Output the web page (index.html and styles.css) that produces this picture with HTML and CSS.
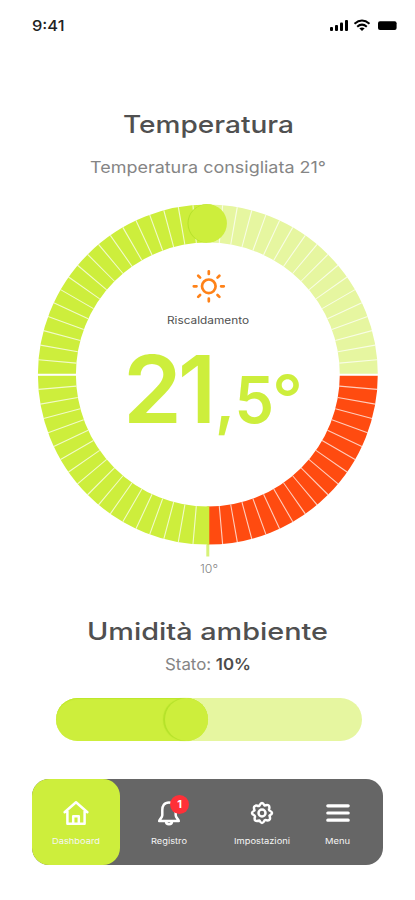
FILE: index.html
```html
<!DOCTYPE html>
<html lang="it">
<head>
<meta charset="utf-8">
<meta name="viewport" content="width=device-width, initial-scale=1">
<title>Temperatura</title>
<link rel="stylesheet" href="styles.css">
</head>
<body>
<main class="screen">
  <header class="status">
    <svg width="40" height="22" class="clock"><text x="1" y="16" textLength="32.5" lengthAdjust="spacingAndGlyphs">9:41</text></svg>
    <svg width="68" height="14" viewBox="0 0 68 14">
      <rect x="0" y="8" width="3" height="4" rx="1"/>
      <rect x="5" y="6" width="3" height="6" rx="1"/>
      <rect x="10" y="3.5" width="3" height="8.5" rx="1"/>
      <rect x="15" y="1" width="3" height="11" rx="1"/>
      <g fill="none" stroke="#000" stroke-width="2"><path d="M24.5 4.7Q32 -1.7 39.5 4.7"/><path d="M27.2 7.7Q32 3.5 36.8 7.7"/></g>
      <path d="M29.3 9.3Q32 7.5 34.7 9.3L32 12Z"/>
      <rect x="48" y="2.2" width="18.6" height="8.8" rx="2"/>
    </svg>
  </header>

  <section class="temperature">
    <h1 class="title"><svg width="172" height="32"><text x="0" y="26" textLength="171" lengthAdjust="spacingAndGlyphs">Temperatura</text></svg></h1>
    <p class="hint"><svg width="238" height="24"><text x="0" y="17" textLength="236" lengthAdjust="spacingAndGlyphs">Temperatura consigliata 21°</text></svg></p>
    <svg class="gauge" width="344" height="376" viewBox="36 202 344 376">
      <g fill="none" stroke-width="38">
        <path class="ring-on" d="M207.8 525.6A151 151 0 0 1 207.8 223.6"/>
        <path class="ring-off" d="M207.8 223.6A151 151 0 0 1 358.8 374.6"/>
        <path class="ring-hot" d="M358.8 374.6A151 151 0 0 1 207.8 525.6"/>
        <circle class="ticks" cx="207.8" cy="374.6" r="151" pathLength="360"/>
      </g>
      <path d="M37 374.7H77M339 374.7H379" stroke="#fff" stroke-width="2"/>
      <path d="M208 506.2V544.8" stroke="#cdee3c" stroke-width="2.6"/>
      <path d="M207.8 545V556.5" stroke="#d7f279" stroke-width="3"/>
      <circle class="knob-shade" cx="206.7" cy="223.4" r="19.2"/>
      <circle class="knob" cx="207.7" cy="223.4" r="19.2"/>
      <g class="sun" transform="translate(208.8 286.3)">
        <circle r="6.8"/>
        <path d="M0-15V-12.3M0 12.3V15M-15 0H-12.3M12.3 0H15M-10.6-10.6L-8.7-8.7M8.7 8.7L10.6 10.6M10.6-10.6L8.7-8.7M-8.7 8.7L-10.6 10.6"/>
      </g>
      <text class="mode" x="167" y="323.5" textLength="82" lengthAdjust="spacingAndGlyphs">Riscaldamento</text>
      <g class="value">
        <text class="whole" x="123" y="422.5" textLength="59" lengthAdjust="spacingAndGlyphs">2</text>
        <text class="whole" x="178" y="422.5" textLength="38" lengthAdjust="spacingAndGlyphs">1</text>
        <text class="decimal" x="215" y="422.5" textLength="59" lengthAdjust="spacingAndGlyphs">,5</text>
        <text class="degree" x="272" y="422" textLength="31" lengthAdjust="spacingAndGlyphs">°</text>
      </g>
      <text class="minimum" x="200" y="573" textLength="18" lengthAdjust="spacingAndGlyphs">10°</text>
    </svg>
  </section>

  <section class="humidity">
    <h2 class="title"><svg width="242" height="34"><text x="0" y="26" textLength="241" lengthAdjust="spacingAndGlyphs">Umidità ambiente</text></svg></h2>
    <p class="hint"><svg width="90" height="24"><text x="2" y="17" textLength="86" lengthAdjust="spacingAndGlyphs">Stato: <tspan class="strong">10%</tspan></text></svg></p>
    <div class="slider"><div class="level"><span class="thumb"></span></div></div>
  </section>

  <nav class="tabs">
    <a class="tab home">
      <svg class="icon" width="28" height="28" viewBox="0 0 28 28"><path d="M2.6 13.2L14 3.3L25.4 13.2M5.4 12V24.7H22.6V12M11.2 24V17.3H16.8V24"/></svg>
      <svg class="label" width="50" height="12"><text x="1" y="8.5" textLength="48" lengthAdjust="spacingAndGlyphs">Dashboard</text></svg>
    </a>
    <a class="tab log">
      <svg class="icon" width="28" height="28" viewBox="0 0 28 28"><path d="M14 3.5C9 3.5 7.3 7.3 7.3 11V16.2C7.3 18.5 4.8 20 4.2 22H23.8C23.2 20 20.7 18.5 20.7 16.2V11C20.7 7.3 19 3.5 14 3.5ZM11 22.5C11 26 17 26 17 22.5"/></svg>
      <span class="badge">1</span>
      <svg class="label" width="38" height="12"><text x="1" y="8.5" textLength="36" lengthAdjust="spacingAndGlyphs">Registro</text></svg>
    </a>
    <a class="tab settings">
      <svg class="icon" width="28" height="28" viewBox="0 0 28 28"><path d="M11.5 6.5Q14 1.4 16.5 6.5Q22 4.6 21.3 9.3Q20.6 10.5 21.5 11.5Q26.6 14 21.5 16.5Q23.4 22 18.7 21.3Q17.5 20.6 16.5 21.5Q14 26.6 11.5 21.5Q6 23.4 6.7 18.7Q7.4 17.5 6.5 16.5Q1.4 14 6.5 11.5Q4.6 6 9.3 6.7Q10.5 7.4 11.5 6.5Z"/><circle cx="14" cy="14" r="3.5"/></svg>
      <svg class="label" width="58" height="12"><text x="1" y="8.5" textLength="56" lengthAdjust="spacingAndGlyphs">Impostazioni</text></svg>
    </a>
    <a class="tab menu">
      <svg class="icon bars" width="28" height="28" viewBox="0 0 28 28"><path d="M3.8 6.8H24.2M3.8 14H24.2M3.8 21.2H24.2"/></svg>
      <svg class="label" width="27" height="12"><text x="1" y="8.5" textLength="25" lengthAdjust="spacingAndGlyphs">Menu</text></svg>
    </a>
  </nav>
</main>
</body>
</html>
```
FILE: styles.css
```css
* { box-sizing: border-box; }
body { margin: 0; background: #fff; font-family: Inter, "Liberation Sans", sans-serif; }
svg { display: block; flex: none; }
h1, h2, p { margin: 0; }
.screen { width: 415px; height: 900px; display: flex; flex-direction: column; overflow: hidden; }
.status { display: flex; justify-content: space-between; align-items: flex-start; padding: 19px 17px 0 31px; height: 107px; }
.clock { margin-top: -4px; font-size: 15px; font-weight: 500; fill: #222; }
.temperature, .humidity { display: flex; flex-direction: column; align-items: center; }
.temperature { height: 507px; }
.temperature .title { margin-left: 3px; }
.temperature .hint { margin: 17px 0 0 2px; }
.title { font-size: 24px; font-weight: 500; fill: #505050; }
.hint { font-size: 16.5px; font-weight: 400; fill: #858585; }
.strong { font-weight: 600; fill: #4c4c4c; }
.gauge { margin: 22px 0 0 1px; }
.ring-on { stroke: #cdee3c; }
.ring-off { stroke: #e6f6a0; }
.ring-hot { stroke: #ff4b10; }
.ticks { stroke: #fff; stroke-opacity: .72; stroke-dasharray: .42 4.58; stroke-dashoffset: .21; }
.knob { fill: #cdee3c; }
.knob-shade { fill: #b5e22a; }
.sun { fill: none; stroke: #ff8218; stroke-width: 2.7; stroke-linecap: round; }
.mode { font-size: 10px; font-weight: 400; fill: #505050; }
.value { fill: #cdee3c; font-weight: 600; }
.whole { font-size: 93px; }
.decimal { font-size: 65px; }
.degree { font-size: 65px; font-weight: 500; }
.minimum { font-size: 12px; font-weight: 300; fill: #858585; }
.humidity { height: 165px; }
.humidity .hint { margin-top: 5px; }
.slider { width: 306px; height: 43px; margin: 21px 0 0 3px; border-radius: 22px; background: #e6f6a0; }
.level { display: flex; justify-content: flex-end; width: 152px; height: 43px; border-radius: 22px; background: #cdee3c; box-shadow: inset 0 1px 1px #bce72b; }
.thumb { width: 43px; height: 43px; border-radius: 50%; background: #cdee3c; box-shadow: -2px 0 1px #b5e22a; }
.tabs { display: flex; width: 351px; height: 86px; margin-left: 32px; border-radius: 17px; background: #666; }
.tab { position: relative; display: flex; flex-direction: column; align-items: center; padding-top: 20px; gap: 8px; }
.home { width: 88px; border-radius: 17px; background: #cdee3c; }
.log { width: 98px; }
.settings { width: 87px; }
.menu { width: 65px; }
.icon { fill: none; stroke: #fff; stroke-width: 2.5; stroke-linejoin: round; stroke-linecap: round; }
.bars { stroke-width: 3.2; }
.label { font-size: 8px; font-weight: 400; fill: #f5f5f5; }
.badge { position: absolute; left: 50px; top: 16px; width: 19px; height: 19px; border-radius: 50%; background: #ff3038; color: #fff; font-size: 11px; font-weight: 700; line-height: 19px; text-align: center; }
```
